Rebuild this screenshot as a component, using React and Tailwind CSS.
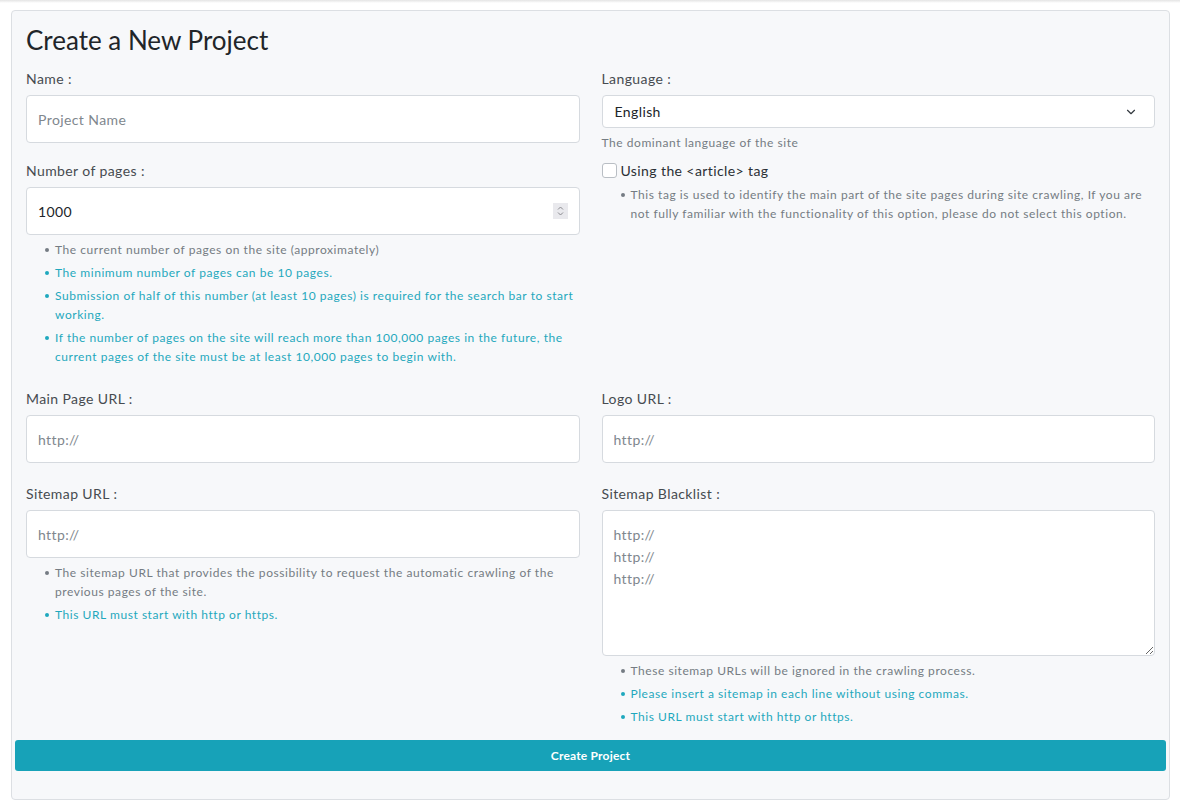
import React from 'react';
import { ChevronDown } from 'lucide-react';

const font = { fontFamily: 'Lato, "Noto Sans", sans-serif' };

const Label = ({ children }) => (
    <label className="block text-[14px] leading-[21px] text-[#464b50] tracking-[0.4px] mb-[6px]">
        {children}
    </label>
);

const TextInput = ({ placeholder }) => (
    <input
        type="text"
        placeholder={placeholder}
        className="block w-full h-[48px] px-[11px] bg-white border border-[#d6dadf] rounded-[4px] text-[14px] tracking-[0.4px] text-[#495057] placeholder:text-[#80878e] outline-none"
    />
);

const Hints = ({ items, className = '' }) => (
    <ul className={`pl-[29px] ${className}`}>
        {items.map((item, i) => (
            <li
                key={i}
                className={`relative text-[12px] leading-[19px] tracking-[0.55px] mb-[4px] ${item.muted ? 'text-[#757c83]' : 'text-[#1fa8bd]'}`}
            >
                <span className="absolute -left-[10px] top-[8px] w-[4px] h-[4px] rounded-full bg-current" />
                {item.text}
            </li>
        ))}
    </ul>
);

export default function App() {
    return (
        <div className="min-h-[810px] bg-white" style={font}>
            {/* navbar shadow edge */}
            <div className="h-[3px] bg-gradient-to-b from-[#e4e4e4] to-white" />

            <div className="ml-[11px] mr-[10px] mt-[7px] border border-[#dcdfe3] rounded-[4px] bg-[#f7f8fa] px-[3px] pt-[13px] pb-[28px]">
                <div className="px-[11px]">
                    <h2 className="text-[26px] leading-[32px] text-[#212529] mb-[12px]">Create a New Project</h2>

                    {/* first row: name / pages + language */}
                    <div className="grid grid-cols-2 gap-x-[22px]">
                        <div>
                            <Label>Name :</Label>
                            <TextInput placeholder="Project Name" />

                            <div className="mt-[17px]">
                                <Label>Number of pages :</Label>
                                <div className="flex items-center h-[48px] pl-[11px] pr-[11px] bg-white border border-[#d6dadf] rounded-[4px]">
                                    <input
                                        type="text"
                                        defaultValue="1000"
                                        className="flex-1 text-[14px] tracking-[0.4px] text-[#212529] outline-none bg-transparent"
                                    />
                                    <span className="flex flex-col items-center justify-center w-[15px] h-[16px] bg-[#e9e9ed]">
                                        <svg width="7" height="12" viewBox="0 0 7 12" fill="none" stroke="#8a8a8f" strokeWidth="1">
                                            <path d="M1 4.5 L3.5 2 L6 4.5" />
                                            <path d="M1 7.5 L3.5 10 L6 7.5" />
                                        </svg>
                                    </span>
                                </div>
                            </div>
                            <Hints
                                className="mt-[5px]"
                                items={[
                                    { text: 'The current number of pages on the site (approximately)', muted: true },
                                    { text: 'The minimum number of pages can be 10 pages.' },
                                    { text: 'Submission of half of this number (at least 10 pages) is required for the search bar to start working.' },
                                    { text: 'If the number of pages on the site will reach more than 100,000 pages in the future, the current pages of the site must be at least 10,000 pages to begin with.' },
                                ]}
                            />
                        </div>

                        <div>
                            <Label>Language :</Label>
                            <div className="flex items-center justify-between h-[33px] pl-[12px] pr-[16px] bg-white border border-[#d6dadf] rounded-[4px] text-[14px] tracking-[0.4px] text-[#212529]">
                                <span>English</span>
                                <ChevronDown className="w-[14px] h-[14px] text-[#343a40]" strokeWidth={2} />
                            </div>
                            <p className="text-[12px] leading-[18px] tracking-[0.55px] text-[#757c83] mt-[6px]">
                                The dominant language of the site
                            </p>
                            <label className="flex items-center gap-[4px] mt-[8px] text-[14px] leading-[21px] tracking-[0.4px] text-[#2b3035]">
                                <input
                                    type="checkbox"
                                    className="appearance-none w-[15px] h-[15px] bg-white border border-[#b9bec4] rounded-[3px]"
                                />
                                Using the &lt;article&gt; tag
                            </label>
                            <Hints
                                className="mt-[4px]"
                                items={[
                                    {
                                        text: 'This tag is used to identify the main part of the site pages during site crawling, If you are not fully familiar with the functionality of this option, please do not select this option.',
                                        muted: true,
                                    },
                                ]}
                            />
                        </div>
                    </div>

                    {/* urls */}
                    <div className="grid grid-cols-2 gap-x-[22px] mt-[18px]">
                        <div>
                            <Label>Main Page URL :</Label>
                            <TextInput placeholder="http://" />
                        </div>
                        <div>
                            <Label>Logo URL :</Label>
                            <TextInput placeholder="http://" />
                        </div>
                    </div>

                    <div className="grid grid-cols-2 gap-x-[22px] mt-[20px]">
                        <div>
                            <Label>Sitemap URL :</Label>
                            <TextInput placeholder="http://" />
                            <Hints
                                className="mt-[5px]"
                                items={[
                                    { text: 'The sitemap URL that provides the possibility to request the automatic crawling of the previous pages of the site.', muted: true },
                                    { text: 'This URL must start with http or https.' },
                                ]}
                            />
                        </div>
                        <div>
                            <Label>Sitemap Blacklist :</Label>
                            <textarea
                                placeholder={'http://\nhttp://\nhttp://'}
                                className="block w-full h-[146px] px-[11px] py-[13px] bg-white border border-[#d6dadf] rounded-[4px] text-[14px] leading-[22px] tracking-[0.4px] text-[#495057] placeholder:text-[#80878e] outline-none"
                            />
                            <Hints
                                className="mt-[5px]"
                                items={[
                                    { text: 'These sitemap URLs will be ignored in the crawling process.', muted: true },
                                    { text: 'Please insert a sitemap in each line without using commas.' },
                                    { text: 'This URL must start with http or https.' },
                                ]}
                            />
                        </div>
                    </div>
                </div>

                <button className="block w-full h-[31px] mt-[10px] rounded-[3px] bg-[#17a2b8] text-white text-[12px] font-bold tracking-[0.2px]">
                    Create Project
                </button>
            </div>
        </div>
    );
}
